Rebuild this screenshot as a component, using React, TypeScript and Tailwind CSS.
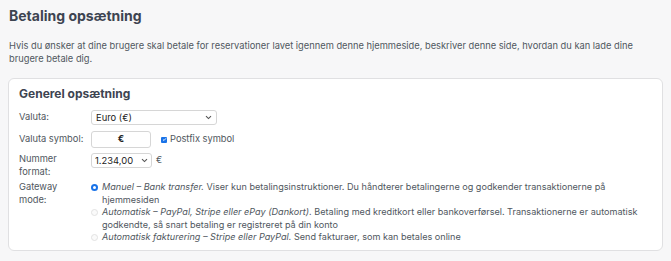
function Chevron() {
  return (
    <svg width="7" height="5" viewBox="0 0 7 5" className="text-[#555]" aria-hidden="true">
      <path d="M1 1.2 3.5 3.6 6 1.2" fill="none" stroke="currentColor" strokeWidth="1.1" />
    </svg>
  );
}

function Radio({ checked }: { checked?: boolean }) {
  return checked ? (
    <span className="mt-[3px] w-[7px] h-[7px] shrink-0 rounded-full bg-[#1a73e8] flex items-center justify-center">
      <span className="w-[3px] h-[3px] rounded-full bg-white" />
    </span>
  ) : (
    <span className="mt-[3px] w-[7px] h-[7px] shrink-0 rounded-full border border-[#e2e2e2] bg-[#fafafa]" />
  );
}

const options = [
  {
    title: "Manuel – Bank transfer.",
    text: " Viser kun betalingsinstruktioner. Du håndterer betalingerne og godkender transaktionerne på hjemmesiden",
    checked: true,
  },
  {
    title: "Automatisk – PayPal, Stripe eller ePay (Dankort).",
    text: " Betaling med kreditkort eller bankoverførsel. Transaktionerne er automatisk godkendte, så snart betaling er registreret på din konto",
  },
  {
    title: "Automatisk fakturering – Stripe eller PayPal.",
    text: " Send fakturaer, som kan betales online",
  },
];

export default function App() {
  return (
    <div
      className="min-h-[261px] bg-[#f7f7f8] px-[8px] pt-[6px] pb-[10px] text-[#50575e] text-[9.3px] leading-[12.5px]"
      style={{ fontFamily: "Inter, 'Liberation Sans', sans-serif" }}
    >
      <h1 className="ml-[1px] text-[14px] leading-[20px] font-bold text-[#3d4451]">Betaling opsætning</h1>

      <p className="mt-[14px] ml-[1px] pr-[20px]">
        Hvis du ønsker at dine brugere skal betale for reservationer lavet igennem denne hjemmeside, beskriver denne side, hvordan du kan lade dine brugere betale dig.
      </p>

      <div className="mt-[13px] bg-white border border-[#e0e0e2] rounded-[6px] pl-[10px] pr-[2px] pt-[6px] pb-[6px]">
        <h2 className="text-[12px] leading-[17px] font-bold text-[#3d4451]">Generel opsætning</h2>

        <div className="mt-[8px] flex items-center">
          <div className="w-[72px] shrink-0">Valuta:</div>
          <div className="relative">
            <select className="appearance-none w-[126px] h-[15px] rounded-[3px] border border-[#d6d6d6] bg-white pl-[4px] text-[9.4px] leading-[13px] text-[#222] outline-none">
              <option>Euro (€)</option>
            </select>
            <span className="absolute right-[5px] top-[5px] pointer-events-none"><Chevron /></span>
          </div>
        </div>

        <div className="mt-[6px] flex items-center">
          <div className="w-[72px] shrink-0">Valuta symbol:</div>
          <div className="w-[60px] h-[17px] rounded-[3px] border border-[#d6d6d6] bg-white flex items-center justify-center text-[#222] font-bold">€</div>
          <span className="ml-[10px] w-[6px] h-[6px] rounded-[1px] bg-[#1a73e8] flex items-center justify-center">
            <svg width="5" height="5" viewBox="0 0 5 5"><path d="M1 2.6 2 3.5 4 1.3" fill="none" stroke="white" strokeWidth="0.9" /></svg>
          </span>
          <span className="ml-[3px]">Postfix symbol</span>
        </div>

        <div className="mt-[5px] flex items-start">
          <div className="w-[72px] shrink-0">Nummer<br />format:</div>
          <div className="relative">
            <select className="appearance-none w-[61px] h-[15px] rounded-[3px] border border-[#d6d6d6] bg-white pl-[3px] text-[9.4px] leading-[13px] text-[#222] outline-none">
              <option>1.234,00</option>
            </select>
            <span className="absolute right-[4px] top-[5px] pointer-events-none"><Chevron /></span>
          </div>
          <span className="ml-[4px] mt-[1px]">€</span>
        </div>

        <div className="mt-[3px] flex items-start">
          <div className="w-[72px] shrink-0">Gateway<br />mode:</div>
          <div className="flex-1 flex flex-col text-[9.1px]">
            {options.map((o) => (
              <div key={o.title} className="flex gap-[4px]">
                <Radio checked={o.checked} />
                <div>
                  <i>{o.title}</i>
                  {o.text}
                </div>
              </div>
            ))}
          </div>
        </div>
      </div>
    </div>
  );
}
